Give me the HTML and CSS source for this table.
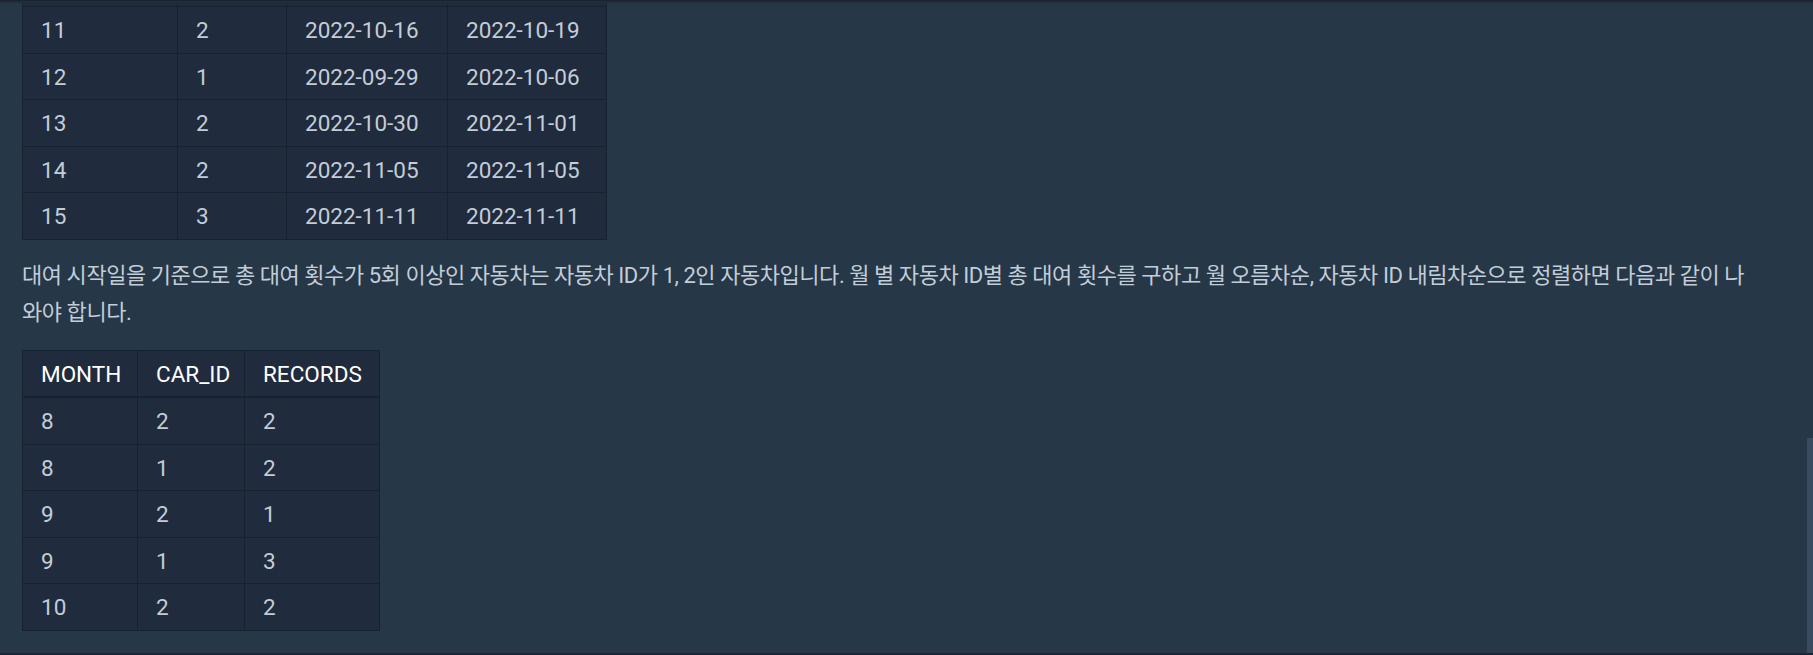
FILE: index.html
```html
<!DOCTYPE html>
<html lang="ko">
<head>
<meta charset="utf-8">
<title>Result</title>
<link rel="stylesheet" href="styles.css">
</head>
<body>
<div class="topbar"></div>
<main class="content">
  <table class="data t1">
    <colgroup>
      <col class="c1"><col class="c2"><col class="c3"><col class="c4">
    </colgroup>
    <tbody>
      <tr class="tail"><td></td><td></td><td></td><td></td></tr>
      <tr><td>11</td><td>2</td><td>2022-10-16</td><td>2022-10-19</td></tr>
      <tr><td>12</td><td>1</td><td>2022-09-29</td><td>2022-10-06</td></tr>
      <tr><td>13</td><td>2</td><td>2022-10-30</td><td>2022-11-01</td></tr>
      <tr><td>14</td><td>2</td><td>2022-11-05</td><td>2022-11-05</td></tr>
      <tr><td>15</td><td>3</td><td>2022-11-11</td><td>2022-11-11</td></tr>
    </tbody>
  </table>
  <p class="desc">대여 시작일을 기준으로 총 대여 횟수가 5회 이상인 자동차는 자동차 ID가 1, 2인 자동차입니다. 월 별 자동차 ID별 총 대여 횟수를 구하고 월 오름차순, 자동차 ID 내림차순으로 정렬하면 다음과 같이 나와야 합니다.</p>
  <table class="data t2">
    <colgroup>
      <col class="d1"><col class="d2"><col class="d3">
    </colgroup>
    <thead>
      <tr><th>MONTH</th><th>CAR_ID</th><th>RECORDS</th></tr>
    </thead>
    <tbody>
      <tr><td>8</td><td>2</td><td>2</td></tr>
      <tr><td>8</td><td>1</td><td>2</td></tr>
      <tr><td>9</td><td>2</td><td>1</td></tr>
      <tr><td>9</td><td>1</td><td>3</td></tr>
      <tr><td>10</td><td>2</td><td>2</td></tr>
    </tbody>
  </table>
</main>
<div class="scrollbar"></div>
<div class="bottombar"></div>
</body>
</html>
```
FILE: styles.css
```css
html, body {
  margin: 0;
  padding: 0;
  height: 100%;
  overflow: hidden;
}
body {
  background: #263747;
  color: #b2c0cc;
  font-family: Roboto, "Noto Sans CJK KR", sans-serif;
  font-size: 22.5px;
  position: relative;
}
.topbar {
  height: 2px;
  background: #222d3c;
  border-top: 1px solid #1a2330;
}
.content {
  padding: 0 22px;
}
.data {
  border-collapse: collapse;
  table-layout: fixed;
  background: #202b3d;
}
.data td, .data th {
  border: 1px solid #172231;
  padding: 7px 18px 5px;
  line-height: 33.5px;
  text-align: left;
  font-weight: 400;
  white-space: nowrap;
  color: #c3cdd8;
}
.data th {
  color: #ffffff;
}
.data thead tr {
  border-bottom: 2px solid #172231;
}
.data .tail td {
  padding: 0;
  height: 3px;
  line-height: 0;
  border-top: none;
}
.t1 { width: 584px; }
.c1 { width: 155px; }
.c2 { width: 109px; }
.c3 { width: 161px; }
.c4 { width: 159px; }
.t2 { width: 357px; }
.d1 { width: 115px; }
.d2 { width: 107px; }
.d3 { width: 135px; }
.desc {
  max-width: 1730px;
  margin: 17px 0 18px;
  font-size: 22px;
  letter-spacing: -0.45px;
  line-height: 37.7px;
  color: #c3cdd8;
}
.scrollbar {
  position: absolute;
  right: 0;
  top: 438px;
  width: 6px;
  height: 215px;
  background: #3a4a5f;
}
.bottombar {
  position: absolute;
  left: 0;
  right: 0;
  bottom: 0;
  height: 2px;
  background: #1b2432;
}
```
